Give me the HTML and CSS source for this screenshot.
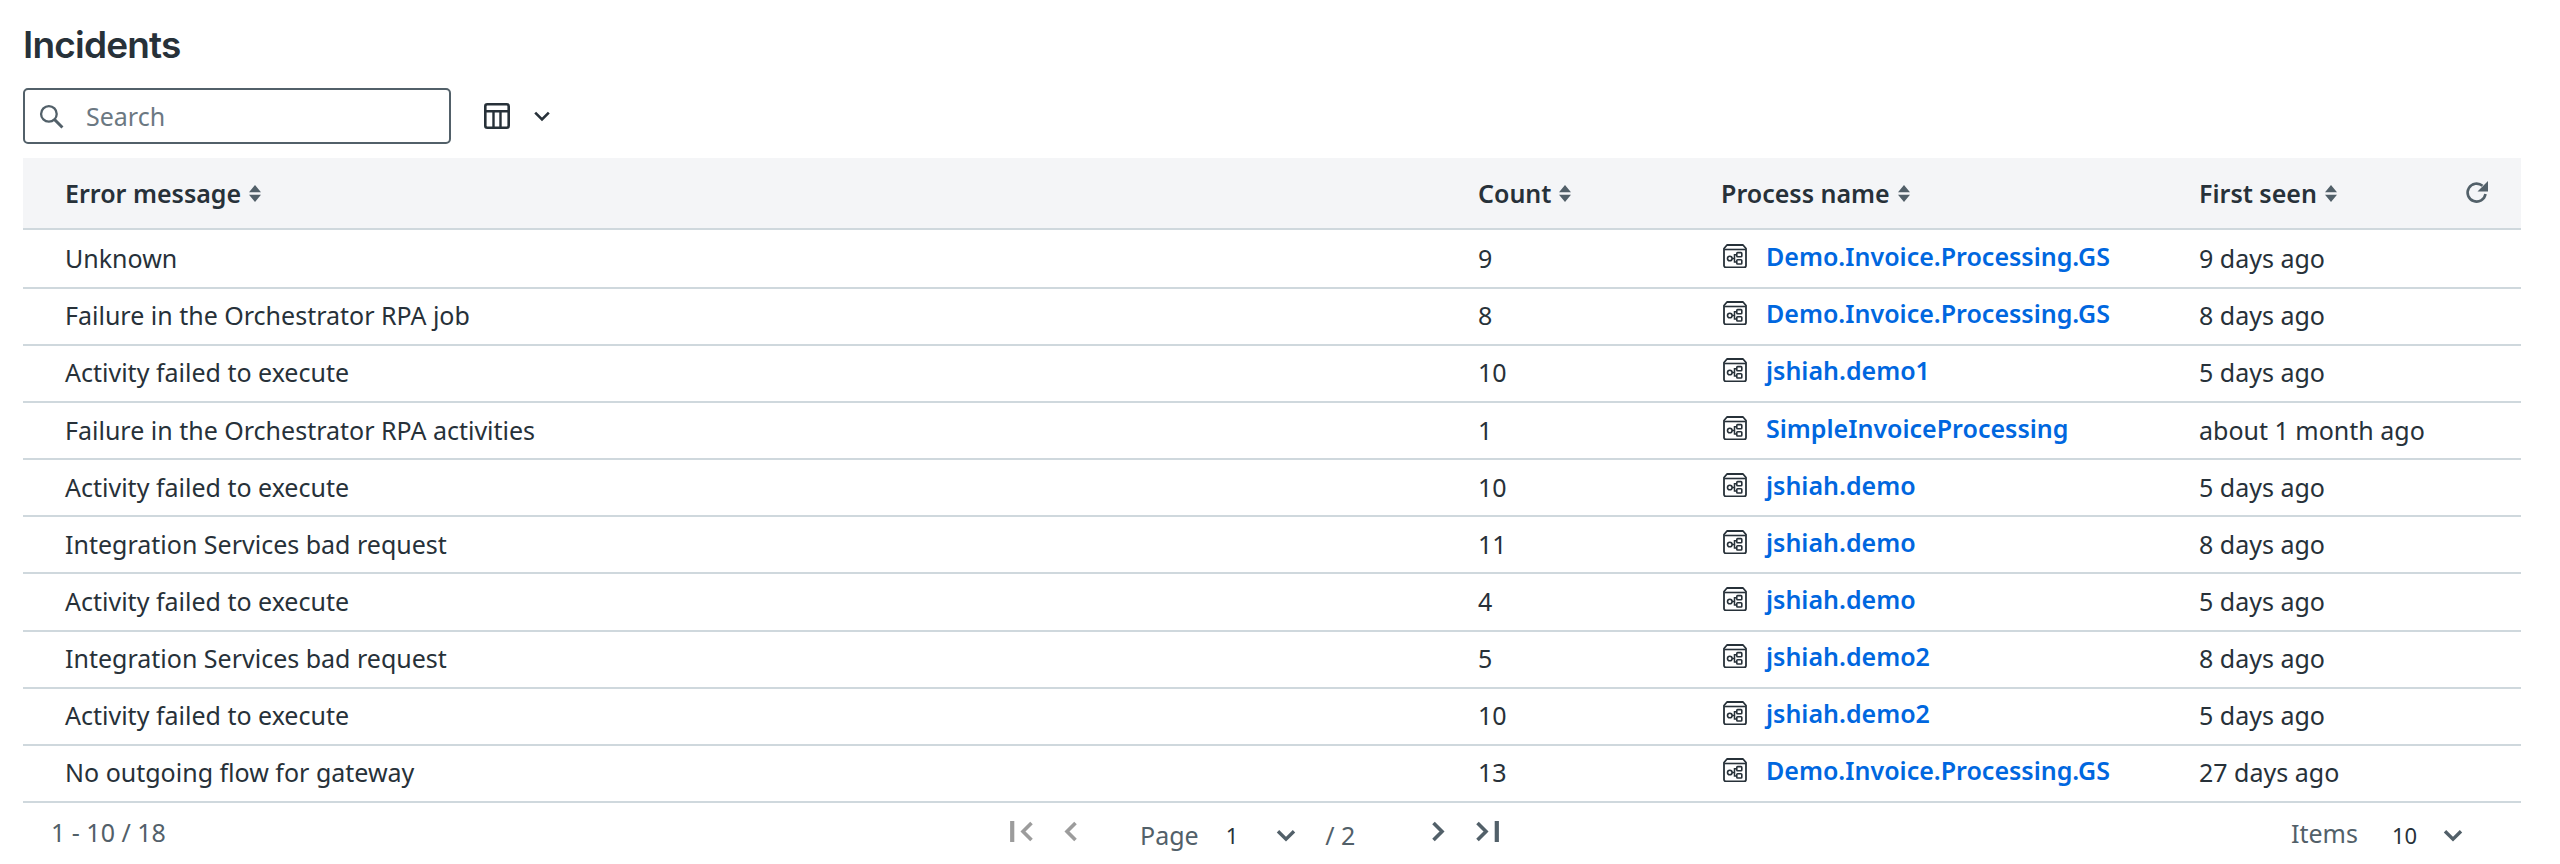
FILE: index.html
```html
<!DOCTYPE html>
<html lang="en">
<head>
<meta charset="utf-8">
<title>Incidents</title>
<link rel="stylesheet" href="styles.css">
</head>
<body>
<svg class="defs" width="0" height="0" aria-hidden="true">
  <symbol id="proc" viewBox="0 0 24 24">
    <path d="M4 1h16l3 3.500V21.500a2 2 0 0 1-2 2H3a2 2 0 0 1-2-2V4.500Z" fill="none" stroke="currentColor" stroke-width="1.800" stroke-linejoin="round"/>
    <path d="M1.500 5.500h21" stroke="currentColor" stroke-width="1.600"/>
    <circle cx="6.800" cy="14.500" r="2.300" fill="none" stroke="currentColor" stroke-width="1.600"/>
    <rect x="13.800" y="8.600" width="5" height="4.200" rx=".8" fill="none" stroke="currentColor" stroke-width="1.600"/>
    <rect x="13.800" y="15.800" width="5" height="4.200" rx=".8" fill="none" stroke="currentColor" stroke-width="1.600"/>
    <path d="M9 14.500h2.500M13.800 10.700h-2.300v7.200h2.300" fill="none" stroke="currentColor" stroke-width="1.500"/>
  </symbol>
  <symbol id="sort" viewBox="0 0 12 17">
    <path d="M6 0l6 7.200H0zM6 17L0 9.800h12z" fill="currentColor"/>
  </symbol>
  <symbol id="chev" viewBox="0 0 20 13">
    <path d="M2 2.200l8 8 8-8" fill="none" stroke="currentColor" stroke-width="3.400"/>
  </symbol>
</svg>
<main class="page">
  <h1 class="title">Incidents</h1>
  <div class="toolbar">
    <label class="search">
      <svg class="search-icon" viewBox="0 0 24 24"><circle cx="9.500" cy="9.500" r="7.500" fill="none" stroke="currentColor" stroke-width="2.200"/><path d="M14.500 14.500l8 8" stroke="currentColor" stroke-width="2.800"/></svg>
      <span class="placeholder">Search</span>
    </label>
    <button class="columns-btn" type="button" aria-label="Columns">
      <svg class="columns-icon" viewBox="0 0 26 26"><rect x="1.300" y="1.300" width="23.400" height="23.400" rx="2" fill="none" stroke="currentColor" stroke-width="2.600"/><path d="M1.300 8.300h23.400M9.500 8.300v16.400M16.500 8.300v16.400" fill="none" stroke="currentColor" stroke-width="2.400"/></svg>
      <svg class="columns-chev" viewBox="0 0 16 11"><path d="M1.200 1.700l6.800 6.800 6.800-6.800" fill="none" stroke="currentColor" stroke-width="2.600"/></svg>
    </button>
  </div>
  <table class="grid">
    <colgroup><col class="c1"><col class="c2"><col class="c3"><col class="c4"></colgroup>
    <thead>
      <tr>
        <th><span class="th">Error message <svg class="sort"><use href="#sort"/></svg></span></th>
        <th><span class="th">Count <svg class="sort"><use href="#sort"/></svg></span></th>
        <th><span class="th">Process name <svg class="sort"><use href="#sort"/></svg></span></th>
        <th>
          <span class="th">First seen <svg class="sort"><use href="#sort"/></svg></span>
          <svg class="refresh" viewBox="0 0 24 24"><path d="M20.500 13A9 9 0 1 1 17.500 4.800" fill="none" stroke="currentColor" stroke-width="2.600"/><path d="M23 0v10.500H12.500z" fill="currentColor"/></svg>
        </th>
      </tr>
    </thead>
    <tbody>
      <tr><td>Unknown</td><td>9</td><td><a class="proc"><svg class="pi"><use href="#proc"/></svg>Demo.Invoice.Processing.GS</a></td><td>9 days ago</td></tr>
      <tr><td>Failure in the Orchestrator RPA job</td><td>8</td><td><a class="proc"><svg class="pi"><use href="#proc"/></svg>Demo.Invoice.Processing.GS</a></td><td>8 days ago</td></tr>
      <tr><td>Activity failed to execute</td><td>10</td><td><a class="proc"><svg class="pi"><use href="#proc"/></svg>jshiah.demo1</a></td><td>5 days ago</td></tr>
      <tr><td>Failure in the Orchestrator RPA activities</td><td>1</td><td><a class="proc"><svg class="pi"><use href="#proc"/></svg>SimpleInvoiceProcessing</a></td><td>about 1 month ago</td></tr>
      <tr><td>Activity failed to execute</td><td>10</td><td><a class="proc"><svg class="pi"><use href="#proc"/></svg>jshiah.demo</a></td><td>5 days ago</td></tr>
      <tr><td>Integration Services bad request</td><td>11</td><td><a class="proc"><svg class="pi"><use href="#proc"/></svg>jshiah.demo</a></td><td>8 days ago</td></tr>
      <tr><td>Activity failed to execute</td><td>4</td><td><a class="proc"><svg class="pi"><use href="#proc"/></svg>jshiah.demo</a></td><td>5 days ago</td></tr>
      <tr><td>Integration Services bad request</td><td>5</td><td><a class="proc"><svg class="pi"><use href="#proc"/></svg>jshiah.demo2</a></td><td>8 days ago</td></tr>
      <tr><td>Activity failed to execute</td><td>10</td><td><a class="proc"><svg class="pi"><use href="#proc"/></svg>jshiah.demo2</a></td><td>5 days ago</td></tr>
      <tr><td>No outgoing flow for gateway</td><td>13</td><td><a class="proc"><svg class="pi"><use href="#proc"/></svg>Demo.Invoice.Processing.GS</a></td><td>27 days ago</td></tr>
    </tbody>
  </table>
  <footer class="pager">
    <div class="range">1 - 10 / 18</div>
    <div class="pages">
      <svg class="nav off" viewBox="0 0 23 21"><path d="M2.200 0v21" fill="none" stroke="currentColor" stroke-width="4.200"/><path d="M21.500 2l-8.500 8.500 8.500 8.500" fill="none" stroke="currentColor" stroke-width="3.600"/></svg>
      <svg class="nav-s off" viewBox="0 0 13 21"><path d="M11.500 2l-8.500 8.500 8.500 8.500" fill="none" stroke="currentColor" stroke-width="3.600"/></svg>
      <span class="label page-label">Page</span>
      <span class="value">1</span>
      <svg class="chev"><use href="#chev"/></svg>
      <span class="label total">/ 2</span>
      <svg class="nav-s next" viewBox="0 0 13 21"><path d="M1.500 2l8.500 8.500-8.500 8.500" fill="none" stroke="currentColor" stroke-width="3.600"/></svg>
      <svg class="nav last" viewBox="0 0 23 21"><path d="M1.500 2l8.500 8.500-8.500 8.500" fill="none" stroke="currentColor" stroke-width="3.600"/><path d="M20.800 0v21" fill="none" stroke="currentColor" stroke-width="4.200"/></svg>
    </div>
    <div class="items">
      <span class="label">Items</span>
      <span class="value">10</span>
      <svg class="chev"><use href="#chev"/></svg>
    </div>
  </footer>
</main>
</body>
</html>
```
FILE: styles.css
```css
html, body { margin: 0; padding: 0; background: #fff; }
body { font-family: "Noto Sans", sans-serif; color: #273139; overflow: hidden; }
.defs { position: absolute; }
.page { width: 2498px; padding: 0 39px 0 23px; }
.title {
  margin: 0; padding-top: 21px; height: 88px; box-sizing: border-box;
  font-family: Inter, sans-serif; font-size: 37px; line-height: 48px; font-weight: 600; letter-spacing: -0.8px; color: #273139;
}
.toolbar { display: flex; align-items: center; height: 56px; }
.search {
  display: flex; align-items: center; box-sizing: border-box; width: 428px; height: 56px;
  border: 2px solid #526069; border-radius: 5px; padding-left: 14px;
}
.search-icon { width: 25px; height: 25px; color: #526069; }
.placeholder { margin-left: 22px; font-size: 25px; color: #6b7882; }
.columns-btn { display: flex; align-items: center; background: none; border: 0; padding: 0 0 0 33px; color: #273139; }
.columns-icon { width: 26px; height: 26px; }
.columns-chev { width: 16px; height: 11px; margin-left: 24px; }
.grid { margin-top: 14px; width: 2498px; border-collapse: collapse; table-layout: fixed; font-size: 25px; }
.c1 { width: 1455px; } .c2 { width: 243px; } .c3 { width: 478px; } .c4 { width: 322px; }
thead tr { height: 71px; background: #f4f5f7; border-bottom: 2px solid #cfd8dd; }
tbody tr { height: 57.15px; border-bottom: 2px solid #cfd8dd; }
tbody tr:first-child { height: 58.7px; }
th, td { padding: 0; text-align: left; vertical-align: middle; }
tbody tr + tr td { padding-bottom: 2px; }
th:first-child, td:first-child { padding-left: 42px; }
th { font-weight: 600; position: relative; }
.th { display: inline-flex; align-items: center; }
.sort { width: 12px; height: 17px; margin-left: 8px; color: #526069; }
.refresh { position: absolute; right: 32px; top: 23px; width: 24px; height: 24px; color: #526069; }
.proc { display: flex; align-items: center; color: #0067df; font-weight: 600; position: relative; top: -2px; }
.pi { width: 24px; height: 24px; margin: 0 19px 0 2px; color: #273139; flex: none; }
.pager { display: flex; align-items: center; height: 60px; }
.range { width: 987px; padding: 0 0 2px 28px; box-sizing: border-box; color: #526069; font-size: 25px; }
.pages { display: flex; align-items: center; width: 1281px; }
.items { display: flex; align-items: center; }
.label { font-size: 25px; color: #526069; }
.pages .label { padding-top: 4px; }
.value { font-size: 22px; color: #273139; margin-top: 5px; }
.nav, .nav-s { height: 21px; margin-bottom: 3px; }
.nav { width: 23px; } .nav-s { width: 13px; }
.off { color: #9c9c9c; }
.nav-s.off { margin-left: 31px; }
.next, .last { color: #526069; }
.page-label { margin-left: 63px; }
.pages .value { margin-left: 27px; }
.chev { width: 20px; height: 13px; color: #526069; margin-top: 6px; }
.pages .chev { margin-left: 38px; }
.total { margin-left: 29px; }
.next { margin-left: 77px; }
.last { margin-left: 31px; }
.items .value { margin-left: 34px; }
.items .chev { margin-left: 26px; }
```
